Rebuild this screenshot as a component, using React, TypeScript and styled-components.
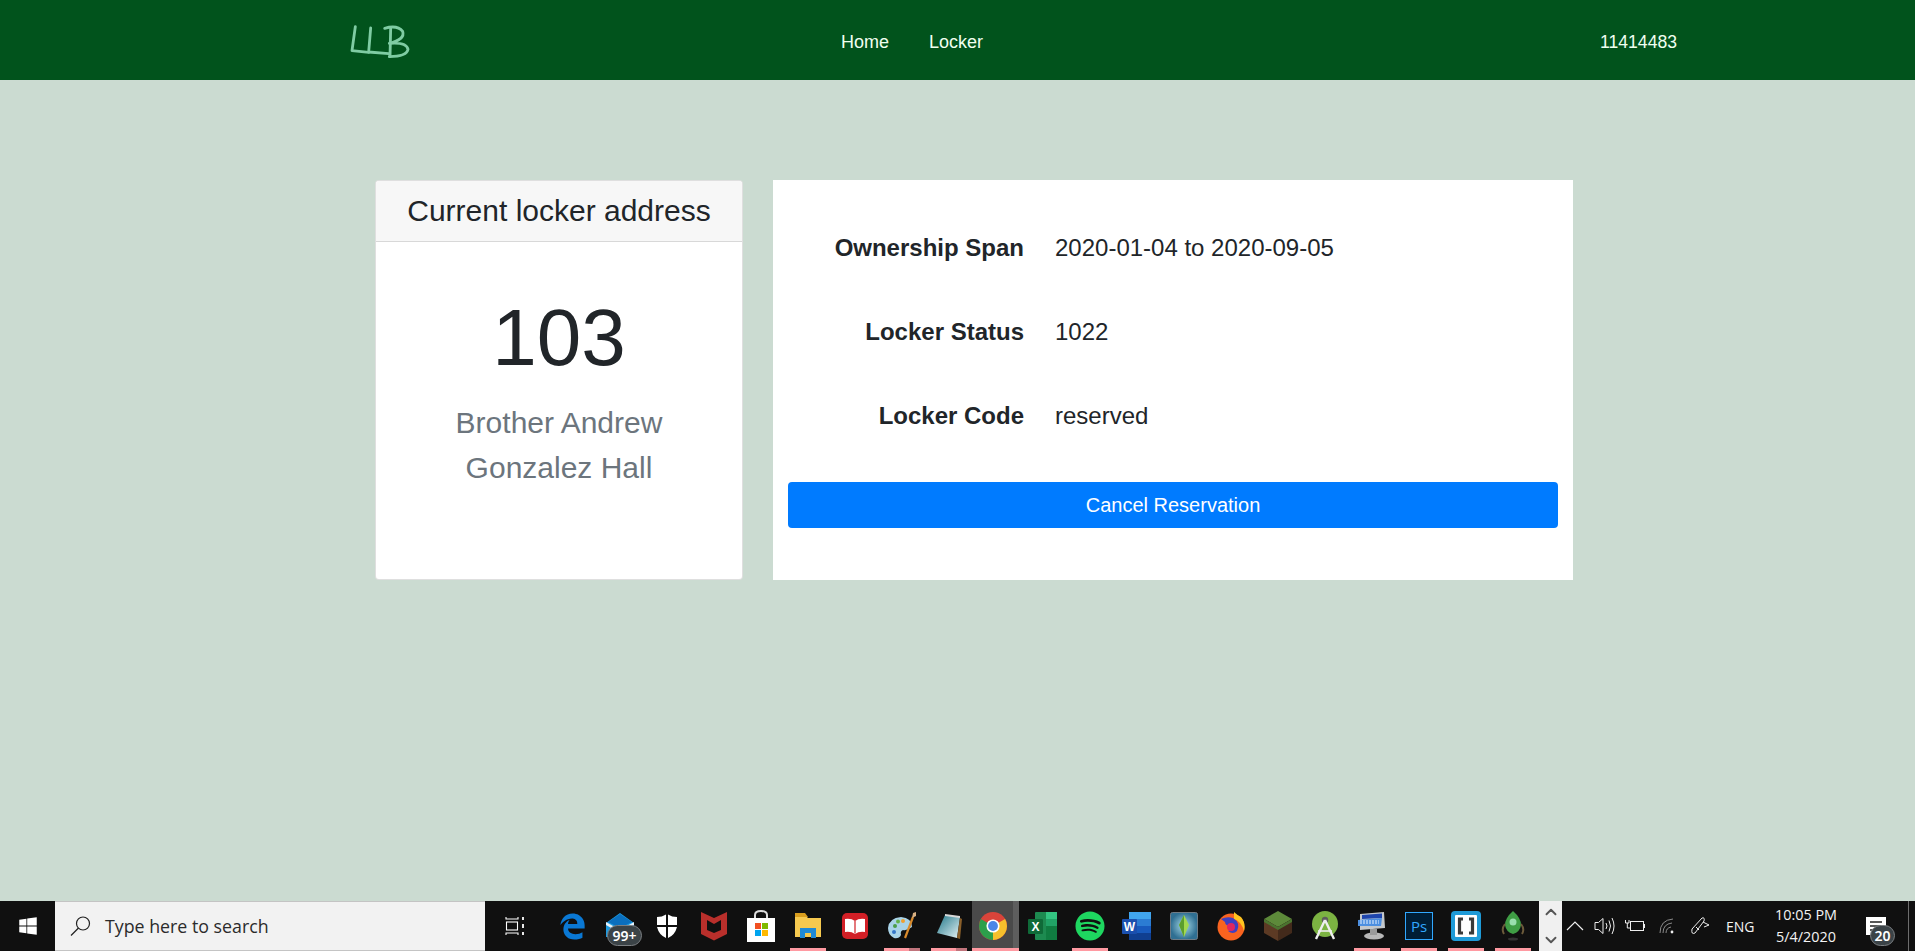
import styled, { createGlobalStyle } from "styled-components";
import { ChevronUp, ChevronDown } from "lucide-react";
import { FaWindows, FaEdgeLegacy, FaSpotify } from "react-icons/fa";

const GlobalStyle = createGlobalStyle`
  * { box-sizing: border-box; }
  html, body { margin: 0; padding: 0; height: 100%; }
  body {
    font-family: "Liberation Sans", Arial, sans-serif;
    background: #cbdbd1;
    overflow: hidden;
  }
`;

const Page = styled.div`
  width: 1915px;
  height: 951px;
  display: flex;
  flex-direction: column;
`;

const Header = styled.header`
  height: 80px;
  flex: none;
  background: #01531c;
  display: flex;
  align-items: center;
  padding: 5px 238px 0 340px;
`;

const Nav = styled.nav`
  display: flex;
  gap: 40px;
  margin-left: 421px;
`;

const NavLink = styled.a`
  color: #f0fff0;
  font-size: 18px;
`;

const UserId = styled.span`
  margin-left: auto;
  color: #f0fff0;
  font-size: 17.6px;
`;

const Main = styled.main`
  flex: 1;
  display: flex;
  align-items: flex-start;
  gap: 30px;
  padding: 100px 0 0 375px;
`;

const AddressCard = styled.section`
  width: 368px;
  height: 400px;
  background: #fff;
  border: 1px solid rgba(0, 0, 0, 0.125);
  border-radius: 4px;
  overflow: hidden;
  display: flex;
  flex-direction: column;
  align-items: center;
`;

const CardHeader = styled.div`
  width: 100%;
  height: 61px;
  flex: none;
  background: #f7f7f7;
  border-bottom: 1px solid rgba(0, 0, 0, 0.125);
  color: #212529;
  font-size: 30px;
  line-height: 60px;
  text-align: center;
`;

const LockerNumber = styled.div`
  margin-top: 48px;
  color: #212529;
  font-size: 80px;
  font-weight: 300;
  line-height: 96px;
`;

const Building = styled.div`
  margin-top: 14px;
  width: 240px;
  color: #6c757d;
  font-size: 30px;
  line-height: 45px;
  text-align: center;
`;

const DetailCard = styled.section`
  width: 800px;
  height: 400px;
  background: #fff;
  padding: 26px 15px 0;
`;

const Row = styled.div`
  height: 84px;
  display: flex;
  align-items: center;
  gap: 31px;
`;

const Label = styled.div`
  width: 236px;
  color: #212529;
  font-size: 24px;
  font-weight: 700;
  text-align: right;
`;

const Value = styled.div`
  color: #212529;
  font-size: 24px;
`;

const CancelButton = styled.button`
  display: block;
  width: 100%;
  height: 46px;
  margin-top: 24px;
  border: none;
  border-radius: 4px;
  background: #007bff;
  color: #fff;
  font-family: inherit;
  font-size: 20px;
`;

const Taskbar = styled.footer`
  height: 50px;
  flex: none;
  background: #101010;
  display: flex;
  align-items: stretch;
  font-family: "Open Sans", "Noto Sans", sans-serif;
`;

const StartButton = styled.div`
  width: 55px;
  flex: none;
  display: flex;
  align-items: center;
  justify-content: center;
  color: #fff;
`;

const SearchBox = styled.div`
  width: 430px;
  flex: none;
  background: #f2f2f2;
  border-top: 1px solid #c4c4c4;
  border-bottom: 1px solid #c4c4c4;
  display: flex;
  align-items: center;
  gap: 14px;
  padding-left: 15px;
  color: #2b2b2b;
  font-size: 17.8px;
`;

const TaskView = styled.div`
  width: 64px;
  flex: none;
  display: flex;
  align-items: center;
  justify-content: center;
  padding-right: 4px;
`;

const Slots = styled.div`
  display: flex;
`;

const Slot = styled.div<{ $active?: boolean }>`
  position: relative;
  width: 47px;
  display: flex;
  align-items: center;
  justify-content: center;
  background: ${(p) => (p.$active ? "linear-gradient(90deg, #4a4a4a 41px, #5e5e5e 41px)" : "transparent")};
  padding-right: ${(p) => (p.$active ? "6px" : "0")};
`;

const RunBar = styled.span<{ $stack?: boolean; $wide?: boolean }>`
  position: absolute;
  left: ${(p) => (p.$wide ? "0" : "5.5px")};
  bottom: 0;
  width: ${(p) => (p.$wide ? "47px" : "36px")};
  height: 3px;
  background: ${(p) =>
    p.$stack ? "linear-gradient(90deg, #ff9aa2 25px, #c0747c 25px)" : "#ff9aa2"};
`;

const Badge = styled.span`
  position: absolute;
  display: flex;
  align-items: center;
  justify-content: center;
  background: #3b4347;
  border: 1px solid #7b7f82;
  border-radius: 12px;
  color: #fff;
  font-family: "Noto Sans", sans-serif;
  font-weight: 600;
`;

const MailBadge = styled(Badge)`
  left: 11px;
  top: 24px;
  width: 35px;
  height: 21px;
  font-size: 14px;
`;

const ScrollStrip = styled.div`
  width: 23px;
  flex: none;
  margin-left: 3px;
  background: #f0f0f0;
  color: #555;
  display: flex;
  flex-direction: column;
  align-items: center;
  justify-content: space-between;
  padding: 2px 0;
`;

const Tray = styled.div`
  flex: 1;
  display: flex;
  align-items: center;
  color: #fff;
`;

const TrayIcon = styled.div<{ $w: number }>`
  width: ${(p) => p.$w}px;
  flex: none;
  display: flex;
  align-items: center;
  justify-content: center;
`;

const Lang = styled.span`
  width: 30px;
  margin-left: 12px;
  font-size: 14px;
  color: #f4f4f4;
`;

const Clock = styled.div`
  width: 80px;
  margin-left: 10px;
  display: flex;
  flex-direction: column;
  align-items: center;
  gap: 4px;
  font-size: 14.4px;
  line-height: 18px;
  color: #f4f4f4;
`;

const Notify = styled.div`
  position: relative;
  width: 30px;
  margin-left: 15px;
  display: flex;
  justify-content: center;
`;

const NotifyBadge = styled(Badge)`
  left: 9px;
  top: 8px;
  width: 25px;
  height: 21px;
  font-size: 14px;
`;

const ShowDesktop = styled.div`
  width: 1px;
  height: 50px;
  margin-left: 17px;
  background: #6d6d6d;
`;

const Logo = () => (
  <svg width="80" height="45" viewBox="0 0 240 135" fill="none" stroke="#7fcca3" strokeWidth="8.5" strokeLinecap="round" strokeLinejoin="round">
    <path d="M46 20 L36 92 L86 97" />
    <path d="M92 24 L86 96 L146 101" />
    <path d="M152 24 L150 110" />
    <path d="M134 25 Q172 14 188 34 Q196 58 148 70 Q200 66 204 88 Q200 110 148 110" />
  </svg>
);

const Mail = () => (
  <svg width="30" height="30" viewBox="0 0 30 30">
    <path d="M1 12 L15 2 L29 12 V26 H1 Z" fill="#1e9be0" />
    <path d="M3 11 L15 3 L27 11 L15 17 Z" fill="#0a6fbe" />
    <path d="M1 11 L15 19 L29 11 V14 L15 22 L1 14 Z" fill="#e8f3fb" />
  </svg>
);

const Shield = () => (
  <svg width="22" height="24" viewBox="0 0 22 24">
    <path d="M1 3 Q6 3 10 0.5 V11 H1 Z M12 0.5 Q16 3 21 3 V11 H12 Z M1 13 H10 V24 Q3 21 1 13 Z M12 13 H21 Q19 21 12 24 Z" fill="#fff" />
  </svg>
);

const McAfee = () => (
  <svg width="28" height="30" viewBox="0 0 28 30">
    <path d="M1 1 L14 7 L27 1 V23 L14 29.5 L1 23 Z" fill="#b92f2b" />
    <path d="M7 9 L14 13 L21 9 V19 L14 22 L7 19 Z" fill="#101010" />
  </svg>
);

const Store = () => (
  <svg width="30" height="32" viewBox="0 0 30 32">
    <path d="M9 9 V5 Q9 1 15 1 Q21 1 21 5 V9" fill="none" stroke="#ddd" strokeWidth="2" />
    <rect x="1" y="8" width="28" height="24" fill="#fff" />
    <rect x="9" y="13" width="6" height="6" fill="#f25022" />
    <rect x="16" y="13" width="6" height="6" fill="#7fba00" />
    <rect x="9" y="20" width="6" height="6" fill="#00a4ef" />
    <rect x="16" y="20" width="6" height="6" fill="#ffb900" />
  </svg>
);

const Folder = () => (
  <svg width="28" height="28" viewBox="0 0 28 28">
    <path d="M1 3 H11 L14 6 H27 V25 H1 Z" fill="#f6c94f" />
    <path d="M1 1 H11 L14 5 H1 Z" fill="#d99e1e" />
    <path d="M6 26 V16 H22 V26 H17 V21 H11 V26 Z" fill="#1f8ad6" />
  </svg>
);

const Reader = () => (
  <svg width="26" height="26" viewBox="0 0 26 26">
    <rect width="26" height="26" rx="5" fill="#d21f26" />
    <path d="M3 6 Q9 5 13 8 Q17 5 23 6 V19 Q17 18 13 21 Q9 18 3 19 Z" fill="#fff" />
    <path d="M13 8 V20.5" stroke="#d21f26" strokeWidth="1.2" />
  </svg>
);

const Palette = () => (
  <svg width="30" height="30" viewBox="0 0 30 30">
    <path d="M1 17 Q2 7 14 6 Q25 7 25 16 Q20 20 16 19 Q13 20 14 24 Q12 28 7 27 Q1 24 1 17 Z" fill="#a9d3e8" />
    <circle cx="8" cy="15" r="2" fill="#4a9d4a" />
    <circle cx="11" cy="10.5" r="2" fill="#63b24a" />
    <circle cx="16" cy="10" r="2" fill="#f0a030" />
    <circle cx="7" cy="21" r="2" fill="#3477c9" />
    <path d="M18 27 L26 6" stroke="#d98a2b" strokeWidth="2.2" />
    <path d="M25 7 L26 2 L29 1 L29 5 Z" fill="#d9b183" />
  </svg>
);

const Notepad = () => (
  <svg width="28" height="28" viewBox="0 0 28 28">
    <defs>
      <linearGradient id="notepadSheet" x1="0" y1="0" x2="1" y2="1">
        <stop offset="0" stopColor="#1f7688" />
        <stop offset="1" stopColor="#e6f3f6" />
      </linearGradient>
    </defs>
    <path d="M10 3 L25 5 L22 26 L2 21 Z" fill="url(#notepadSheet)" />
    <path d="M10 2 L25 4 L25 6 L10 4 Z" fill="#d9d9d9" />
    <path d="M25 6 L27 7 L25 27 L22 26 Z" fill="#8a5f2a" />
  </svg>
);

const Chrome = () => (
  <svg width="28" height="28" viewBox="0 0 34 34">
    <circle cx="17" cy="17" r="17" fill="#d9443a" />
    <path d="M17 17 L31.7 8.5 A17 17 0 0 1 17 34 Z" fill="#f6c02c" />
    <path d="M17 17 L17 34 A17 17 0 0 1 2.3 8.5 Z" fill="#2c9f4b" />
    <circle cx="17" cy="17" r="8" fill="#fff" />
    <circle cx="17" cy="17" r="6" fill="#4a86e8" />
  </svg>
);

const Excel = () => (
  <svg width="30" height="28" viewBox="0 0 30 28">
    <rect x="7" y="0" width="22" height="28" rx="1" fill="#1d8a50" />
    <rect x="18" y="0" width="11" height="7" fill="#33c481" />
    <rect x="18" y="7" width="11" height="7" fill="#21a366" />
    <rect x="18" y="14" width="11" height="14" fill="#107c41" />
    <rect x="0" y="7" width="15" height="15" rx="1" fill="#0f6a38" />
    <text x="7.5" y="19" textAnchor="middle" fontSize="12" fontWeight="700" fill="#fff" fontFamily="Liberation Sans, sans-serif">X</text>
  </svg>
);

const Word = () => (
  <svg width="30" height="28" viewBox="0 0 30 28">
    <rect x="7" y="0" width="22" height="7" fill="#41a5ee" />
    <rect x="7" y="7" width="22" height="7" fill="#2b7cd3" />
    <rect x="7" y="14" width="22" height="7" fill="#185abd" />
    <rect x="7" y="21" width="22" height="7" fill="#103f91" />
    <rect x="0" y="7" width="15" height="15" rx="1" fill="#1a4fae" />
    <text x="7.5" y="19" textAnchor="middle" fontSize="12" fontWeight="700" fill="#fff" fontFamily="Liberation Sans, sans-serif">W</text>
  </svg>
);

const Sims = () => (
  <svg width="28" height="28" viewBox="0 0 28 28">
    <defs>
      <radialGradient id="simsBack">
        <stop offset="0" stopColor="#a8dbe8" />
        <stop offset="1" stopColor="#2f6f92" />
      </radialGradient>
    </defs>
    <rect x="0.5" y="0.5" width="27" height="27" rx="2" fill="url(#simsBack)" stroke="#6f7c86" />
    <path d="M14 3 L19 13 L14 25 L9 13 Z" fill="#a3d94f" />
    <path d="M14 3 L14 25 L9 13 Z" fill="#5c9e2e" />
  </svg>
);

const Firefox = () => (
  <svg width="28" height="30" viewBox="0 0 28 30">
    <circle cx="14" cy="16" r="13.5" fill="#f9631f" />
    <path d="M17 1 Q20 4 24 6 Q29 12 27 20 Q24 10 17 8 Z" fill="#ffc41f" />
    <path d="M4 8 Q10 5 16 7 Q24 12 20 20 Q16 24 11 20 Q16 19 14 15 Q8 15 8 11 Z" fill="#3f3fc0" />
    <circle cx="14" cy="16" r="4" fill="#e1265f" />
  </svg>
);

const Minecraft = () => (
  <svg width="28" height="30" viewBox="0 0 28 30">
    <path d="M14 0 L28 8 L14 16 L0 8 Z" fill="#5d8a3a" />
    <path d="M0 8 L14 16 V30 L0 22 Z" fill="#5c3a24" />
    <path d="M28 8 L14 16 V30 L28 22 Z" fill="#432a1b" />
    <path d="M0 8 L14 16 L28 8 V11 L14 19 L0 11 Z" fill="#4b7430" />
  </svg>
);

const AndroidStudio = () => (
  <svg width="26" height="30" viewBox="0 0 26 30">
    <circle cx="13" cy="13" r="13" fill="#7cb342" />
    <circle cx="13" cy="9" r="3.2" fill="#5d5d5d" />
    <path d="M13 9 L4 28 M13 9 L22 28" stroke="#eee" strokeWidth="2.4" />
    <path d="M6 20 H20" stroke="#eee" strokeWidth="1.6" />
  </svg>
);

const Keyboard = () => (
  <svg width="30" height="30" viewBox="0 0 30 30">
    <path d="M3 3 L27 1 L28 17 L3 19 Z" fill="#c4c8cc" />
    <path d="M5 4 L25 2.5 L25 7 L5 8 Z" fill="#1e45ad" />
    <path d="M1 9 L25 7 L24 15 L1 15 Z" fill="#4d8fe0" />
    <path d="M3 10 H22 M3 12 H22" stroke="#e6f1ff" strokeWidth="1" strokeDasharray="2 1" />
    <ellipse cx="17" cy="25" rx="10" ry="3.5" fill="#b8b8b8" />
    <rect x="13" y="18" width="7" height="6" fill="#9a9a9a" />
  </svg>
);

const Photoshop = () => (
  <svg width="28" height="28" viewBox="0 0 28 28">
    <rect x="0.5" y="0.5" width="27" height="27" fill="#001e36" stroke="#31a8ff" />
    <text x="14" y="20" textAnchor="middle" fontSize="15" fill="#31a8ff" fontFamily="Open Sans, sans-serif">Ps</text>
  </svg>
);

const Brackets = () => (
  <svg width="30" height="30" viewBox="0 0 30 30">
    <rect width="30" height="30" rx="4" fill="#1f9bd8" />
    <rect x="4" y="4" width="22" height="22" rx="1" fill="#fff" />
    <path d="M12 8 H8.5 V22 H12 M18 8 H21.5 V22 H18" fill="none" stroke="#3a3a3a" strokeWidth="3.2" />
  </svg>
);

const Rocket = () => (
  <svg width="24" height="30" viewBox="0 0 24 30">
    <path d="M12 0 Q20 7 20 14 Q19 21 12 23 Q5 21 4 14 Q4 7 12 0 Z" fill="#3f9e45" />
    <circle cx="12" cy="11" r="3.5" fill="#9adfae" />
    <path d="M4 13 Q0 18 3 23 M20 13 Q24 18 21 23" fill="none" stroke="#6b5a3a" strokeWidth="2" />
    <ellipse cx="12" cy="28" rx="5" ry="1.5" fill="#333" />
  </svg>
);

const Search = () => (
  <svg width="21" height="20" viewBox="0 0 21 20" fill="none" stroke="#222" strokeWidth="1.2">
    <circle cx="13" cy="7.5" r="6.5" />
    <path d="M8.5 12 L1 19.5" />
  </svg>
);

const TaskViewIcon = () => (
  <svg width="20" height="20" viewBox="0 0 20 20" fill="none" stroke="#fff" strokeWidth="1.1">
    <path d="M1 1 V3 H13 V1 M1 19 V17 H13 V19" />
    <rect x="1.5" y="6" width="11" height="8" />
    <path d="M18 1 V4 M18 8 V12 M18 16 V19" strokeWidth="1.8" />
  </svg>
);

const Caret = () => (
  <svg width="18" height="10" viewBox="0 0 18 10" fill="none" stroke="#eee" strokeWidth="1.2">
    <path d="M1 9 L9 1 L17 9" />
  </svg>
);

const Speaker = () => (
  <svg width="22" height="20" viewBox="0 0 22 20" fill="none" stroke="#eee" strokeWidth="1">
    <path d="M1 6.5 H4.5 L9 2.5 V17.5 L4.5 13.5 H1 Z" />
    <path d="M12 7 Q14 10 12 13 M15 4.5 Q18 10 15 15.5 M18 2 Q22 10 18 18" />
  </svg>
);

const Battery = () => (
  <svg width="20" height="14" viewBox="0 0 20 14" fill="none" stroke="#eee" strokeWidth="1">
    <rect x="5.5" y="2.5" width="13" height="9" />
    <path d="M19.5 5 V9" />
    <path d="M0.5 1 V4 H4 V1 M2.3 4 V9 H5" />
  </svg>
);

const Wifi = () => (
  <svg width="16" height="16" viewBox="0 0 16 16" fill="none" stroke="#8a8a8a" strokeWidth="1">
    <path d="M1 15 Q1 2 14 1 M4 15 Q4 6 13 5 M7 15 Q7 10 12 9" />
    <circle cx="13" cy="14" r="1.4" fill="#eee" stroke="none" />
  </svg>
);

const Pen = () => (
  <svg width="20" height="20" viewBox="0 0 20 20" fill="none" stroke="#eee" strokeWidth="1">
    <path d="M2 13 L12 2 Q15 1 14 5 L5 17 Q1 19 2 13 Z" />
    <path d="M13 6 L19 9 L14 11 M6 11 L9 14" />
  </svg>
);

const NotifyIcon = () => (
  <svg width="20" height="18" viewBox="0 0 20 18">
    <rect width="20" height="18" fill="#fff" />
    <path d="M4 5 H16 M4 9 H16 M4 13 H12" stroke="#222" strokeWidth="1.3" />
  </svg>
);

const apps = [
  { icon: <FaEdgeLegacy size={27} color="#0a78d4" /> },
  { icon: <Mail />, badge: "99+" },
  { icon: <Shield /> },
  { icon: <McAfee /> },
  { icon: <Store /> },
  { icon: <Folder />, bar: true },
  { icon: <Reader /> },
  { icon: <Palette />, bar: true, stack: true },
  { icon: <Notepad />, bar: true, stack: true },
  { icon: <Chrome />, bar: true, active: true },
  { icon: <Excel /> },
  { icon: <FaSpotify size={30} color="#1ed760" />, bar: true },
  { icon: <Word /> },
  { icon: <Sims /> },
  { icon: <Firefox /> },
  { icon: <Minecraft /> },
  { icon: <AndroidStudio /> },
  { icon: <Keyboard />, bar: true },
  { icon: <Photoshop />, bar: true },
  { icon: <Brackets />, bar: true },
  { icon: <Rocket />, bar: true },
];

const details = [
  { label: "Ownership Span", value: "2020-01-04 to 2020-09-05" },
  { label: "Locker Status", value: "1022" },
  { label: "Locker Code", value: "reserved" },
];

const App = () => {
  return (
    <Page>
      <GlobalStyle />
      <Header>
        <Logo />
        <Nav>
          <NavLink>Home</NavLink>
          <NavLink>Locker</NavLink>
        </Nav>
        <UserId>11414483</UserId>
      </Header>

      <Main>
        <AddressCard>
          <CardHeader>Current locker address</CardHeader>
          <LockerNumber>103</LockerNumber>
          <Building>Brother Andrew Gonzalez Hall</Building>
        </AddressCard>

        <DetailCard>
          {details.map((d) => (
            <Row key={d.label}>
              <Label>{d.label}</Label>
              <Value>{d.value}</Value>
            </Row>
          ))}
          <CancelButton>Cancel Reservation</CancelButton>
        </DetailCard>
      </Main>

      <Taskbar>
        <StartButton>
          <FaWindows size={20} />
        </StartButton>
        <SearchBox>
          <Search />
          Type here to search
        </SearchBox>
        <TaskView>
          <TaskViewIcon />
        </TaskView>
        <Slots>
          {apps.map((app, i) => (
            <Slot key={i} $active={app.active}>
              {app.icon}
              {app.badge && <MailBadge>{app.badge}</MailBadge>}
              {app.bar && <RunBar $stack={app.stack} $wide={app.active} />}
            </Slot>
          ))}
        </Slots>
        <ScrollStrip>
          <ChevronUp size={18} strokeWidth={2.5} />
          <ChevronDown size={18} strokeWidth={2.5} />
        </ScrollStrip>
        <Tray>
          <TrayIcon $w={26}><Caret /></TrayIcon>
          <TrayIcon $w={34}><Speaker /></TrayIcon>
          <TrayIcon $w={26}><Battery /></TrayIcon>
          <TrayIcon $w={38}><Wifi /></TrayIcon>
          <TrayIcon $w={28}><Pen /></TrayIcon>
          <Lang>ENG</Lang>
          <Clock>
            <span>10:05 PM</span>
            <span>5/4/2020</span>
          </Clock>
          <Notify>
            <NotifyIcon />
            <NotifyBadge>20</NotifyBadge>
          </Notify>
          <ShowDesktop />
        </Tray>
      </Taskbar>
    </Page>
  );
};

export default App;
